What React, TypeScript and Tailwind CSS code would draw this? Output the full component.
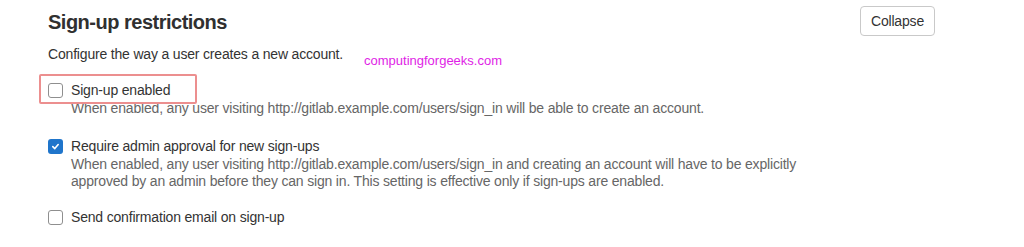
const CheckboxRow = ({
  checked,
  label,
  help,
}: {
  checked?: boolean;
  label: string;
  help?: string[];
}) => {
  return (
    <div className="flex items-start gap-[8px]">
      {checked ? (
        <div className="mt-[3px] w-[15px] h-[15px] shrink-0 rounded-[3px] bg-[#1f75cb] flex items-center justify-center">
          <svg width="9" height="9" viewBox="0 0 10 10" fill="none">
            <path d="M2 5.2 L4.2 7.3 L8 2.8" stroke="white" strokeWidth="1.8" strokeLinecap="round" strokeLinejoin="round" />
          </svg>
        </div>
      ) : (
        <div className="mt-[3px] w-[15px] h-[15px] shrink-0 rounded-[3px] border border-[#8f8f8f] bg-white" />
      )}
      <div>
        <p className="text-[14px] leading-[20px] text-[#333]">{label}</p>
        {help && (
          <div className="text-[14px] leading-[17px] text-[#666]">
            {help.map((h, i) => (
              <p key={i}>{h}</p>
            ))}
          </div>
        )}
      </div>
    </div>
  );
};

export default function App() {
  return (
    <div className="relative w-[1024px] h-[247px] bg-white overflow-hidden font-['Liberation_Sans',Arial,sans-serif] tracking-[-0.18px]">
      {/* watermark */}
      <span className="absolute left-[364px] top-[53px] text-[13px] leading-[16px] tracking-normal text-[#e01ee6]">
        computingforgeeks.com
      </span>

      <div className="pl-[48px] pr-[89px] pt-[6px] flex justify-between items-start">
        <div>
          <h2 className="mt-[3px] text-[20px] leading-[26px] font-bold tracking-[-0.5px] text-[#303030]">
            Sign-up restrictions
          </h2>
          <p className="mt-[10px] text-[14px] leading-[19px] text-[#333]">
            Configure the way a user creates a new account.
          </p>
        </div>
        <button className="h-[30px] px-[10px] rounded-[4px] border border-[#c9c9c9] bg-white text-[14px] text-[#333]">
          Collapse
        </button>
      </div>

      <div className="pl-[48px] pt-[16px] flex flex-col">
        <div className="relative">
          <div className="absolute left-[-9px] top-[-6px] w-[158px] h-[30px] border-2 border-[#ec8f8f] rounded-[2px]" />
          <CheckboxRow
            label="Sign-up enabled"
            help={[
              "When enabled, any user visiting http://gitlab.example.com/users/sign_in will be able to create an account.",
            ]}
          />
        </div>
        <div className="mt-[19px]">
          <CheckboxRow
            checked
            label="Require admin approval for new sign-ups"
            help={[
              "When enabled, any user visiting http://gitlab.example.com/users/sign_in and creating an account will have to be explicitly",
              "approved by an admin before they can sign in. This setting is effective only if sign-ups are enabled.",
            ]}
          />
        </div>
        <div className="mt-[17px]">
          <CheckboxRow label="Send confirmation email on sign-up" />
        </div>
      </div>
    </div>
  );
}
